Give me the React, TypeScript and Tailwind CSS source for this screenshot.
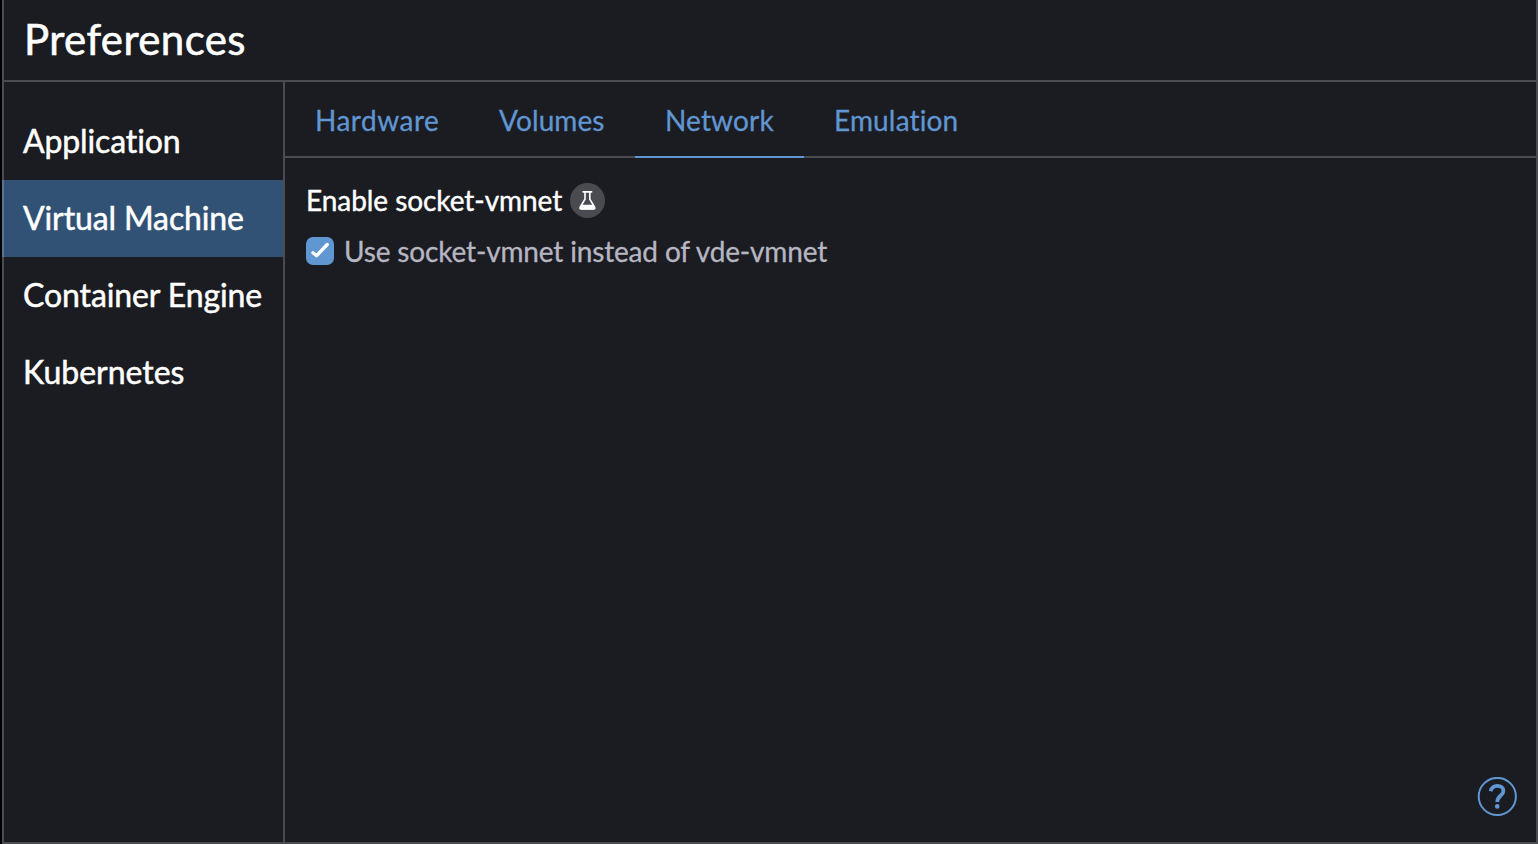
const nav = [
  { label: 'Application', tracking: 'tracking-[-0.12px]' },
  { label: 'Virtual Machine', tracking: 'tracking-[-0.12px]', active: true },
  { label: 'Container Engine', tracking: 'tracking-[-0.1px]' },
  { label: 'Kubernetes', tracking: 'tracking-normal' },
];

const tabs = [
  { label: 'Hardware', tracking: 'tracking-[0.5px]', width: 'w-[184px]' },
  { label: 'Volumes', tracking: 'tracking-[0.1px]', width: 'w-[166px]' },
  { label: 'Network', tracking: 'tracking-[0.15px]', width: 'w-[169px]', active: true },
  { label: 'Emulation', tracking: 'tracking-[0.15px]', width: 'w-[184px]' },
];

function FlaskBadge() {
  return (
    <span className="flex size-[35px] items-center justify-center rounded-full bg-[#4a4b50]">
      <svg width="35" height="35" viewBox="0 0 35 35" fill="none">
        <path d="M13.2 8.8H21.6" stroke="white" strokeWidth="1.7" strokeLinecap="round" />
        <path d="M15 9V16.2L10.2 24.2Q9.4 26 11.3 26H23.5Q25.4 26 24.6 24.2L19.8 16.2V9" stroke="white" strokeWidth="1.6" />
        <path d="M12 21.7H22.8L25 25L24 26.4H10.8L9.8 25Z" fill="white" />
      </svg>
    </span>
  );
}

function Checkbox() {
  return (
    <span className="size-7 shrink-0 rounded-[7px] bg-[#6096d2]">
      <svg width="28" height="28" viewBox="0 0 28 28" fill="none">
        <path d="M7 15.8L10.6 18.7L21.2 7.5" stroke="white" strokeWidth="3.4" strokeLinecap="round" strokeLinejoin="round" />
      </svg>
    </span>
  );
}

function HelpIcon() {
  return (
    <svg width="40" height="40" viewBox="0 0 40 40" fill="none">
      <circle cx="20.3" cy="19.5" r="18.6" stroke="#6096d2" strokeWidth="2" />
      <path d="M13.6 14.3C14.5 10.7 16.8 8.9 20.4 8.9C24.2 8.9 26.4 10.9 26.4 14C26.4 18.6 20.3 18.6 20.3 25" stroke="#6096d2" strokeWidth="3.8" />
      <circle cx="20.2" cy="29.4" r="2.3" fill="#6096d2" />
    </svg>
  );
}

export default function App() {
  return (
    <div className="h-[844px] w-[1538px] bg-black pl-[2px] font-['Lato',sans-serif] text-white [font-variant-ligatures:none]">
      <div className="flex h-full flex-col border-x-2 border-b-2 border-[#4b4c51] bg-[#1b1c21]">
        <header className="flex h-[82px] shrink-0 items-center border-b-2 border-[#4b4c51] pb-[2px] pl-[20px]">
          <h1 className="text-[42px] leading-none tracking-[0.4px] [-webkit-text-stroke:0.6px_currentColor]">Preferences</h1>
        </header>
        <div className="flex flex-1">
          <nav className="flex w-[281px] shrink-0 flex-col border-r-2 border-[#4b4c51] pt-[21px]">
            {nav.map((n) => (
              <a
                key={n.label}
                className={`flex h-[77px] items-center whitespace-nowrap pb-[1px] pl-[19px] text-[32px] [-webkit-text-stroke:0.5px_currentColor] ${n.tracking} ${n.active ? '-ml-[2px] border-l-2 border-[#5a7695] bg-[#315275]' : ''}`}
              >
                {n.label}
              </a>
            ))}
          </nav>
          <main className="flex flex-1 flex-col">
            <div className="flex h-[76px] shrink-0 border-b-2 border-[#4b4c51]">
              {tabs.map((t) => (
                <a
                  key={t.label}
                  className={`flex h-[76px] shrink-0 items-center border-b-2 pt-[2px] pl-[30px] text-[28px] text-[#6096d2] [-webkit-text-stroke:0.3px_currentColor] ${t.tracking} ${t.width} ${t.active ? 'border-[#6096d2]' : 'border-transparent'}`}
                >
                  {t.label}
                </a>
              ))}
            </div>
            <section className="flex flex-1 flex-col pt-[24px] pl-[21px]">
              <div className="flex h-[37px] items-center gap-[8px] text-[28px]">
                <span className="w-[256px] whitespace-nowrap pb-[2px] tracking-[-0.06px] [-webkit-text-stroke:0.4px_currentColor]">Enable socket-vmnet</span>
                <FlaskBadge />
              </div>
              <label className="mt-[14px] flex h-[36px] items-center gap-[10px] text-[28px] tracking-[-0.16px] text-[#b6b6c2] [-webkit-text-stroke:0.3px_currentColor]">
                <Checkbox />
                Use socket-vmnet instead of vde-vmnet
              </label>
            </section>
            <footer className="flex justify-end pr-[19px] pb-[25px]">
              <HelpIcon />
            </footer>
          </main>
        </div>
      </div>
    </div>
  );
}
